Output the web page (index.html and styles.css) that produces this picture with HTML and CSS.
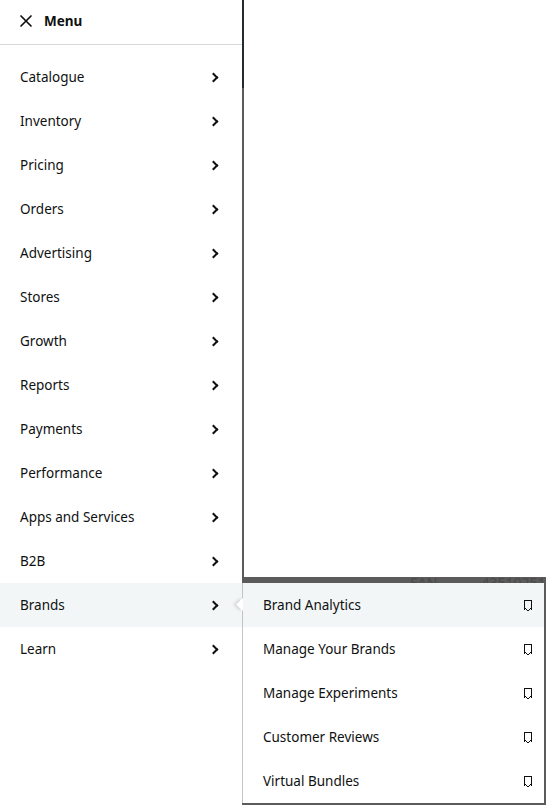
FILE: index.html
```html
<!DOCTYPE html>
<html lang="en">
<head>
  <meta charset="UTF-8">
  <meta name="viewport" content="width=device-width, initial-scale=1.0" />
  <title>Seller Central - Menu</title>
  <link rel="stylesheet" href="styles.css">
</head>
<body>

  <div class="shell">

    <!-- side navigation drawer -->
    <nav class="drawer">
      <div class="drawer-head">
        <svg class="close-icon" width="14" height="14" viewBox="0 0 14 14">
          <path d="M2 2L12 12M12 2L2 12" stroke="#0f1111" stroke-width="1.7" stroke-linecap="round" fill="none"/>
        </svg>
        <span class="drawer-title">Menu</span>
      </div>

      <ul class="nav-list">
        <li class="nav-item">Catalogue<span class="chev"></span></li>
        <li class="nav-item">Inventory<span class="chev"></span></li>
        <li class="nav-item">Pricing<span class="chev"></span></li>
        <li class="nav-item">Orders<span class="chev"></span></li>
        <li class="nav-item">Advertising<span class="chev"></span></li>
        <li class="nav-item">Stores<span class="chev"></span></li>
        <li class="nav-item">Growth<span class="chev"></span></li>
        <li class="nav-item">Reports<span class="chev"></span></li>
        <li class="nav-item">Payments<span class="chev"></span></li>
        <li class="nav-item">Performance<span class="chev"></span></li>
        <li class="nav-item">Apps and Services<span class="chev"></span></li>
        <li class="nav-item">B2B<span class="chev"></span></li>
        <li class="nav-item active">Brands<span class="chev"></span>
          <!-- flyout for Brands -->
          <div class="flyout">
            <span class="flyout-arrow"></span>
            <ul class="sub-list">
              <li class="sub-item active">Brand Analytics<span class="pin"></span></li>
              <li class="sub-item">Manage Your Brands<span class="pin"></span></li>
              <li class="sub-item">Manage Experiments<span class="pin"></span></li>
              <li class="sub-item">Customer Reviews<span class="pin"></span></li>
              <li class="sub-item">Virtual Bundles<span class="pin"></span></li>
            </ul>
          </div>
        </li>
        <li class="nav-item">Learn<span class="chev"></span></li>
      </ul>
    </nav>

    <!-- page behind the drawer, dimmed -->
    <main class="backdrop">
      <div class="sheet"></div>
      <div class="sheet-row">
        <span class="cell-label">EAN</span>
        <span class="cell-value">4351025109</span>
      </div>
    </main>

  </div>

</body>
</html>
```

FILE: styles.css
```css
* {
  box-sizing: border-box;
}

body {
  margin: 0;
  font-family: 'Noto Sans', 'Open Sans', sans-serif;
  color: #0f1111;
  background: #5b5b5b;
  overflow: hidden;
}

.shell {
  display: flex;
  height: 805px;
}

/* drawer */

.drawer {
  width: 242px;
  flex-shrink: 0;
  background: #fff;
  position: relative;
  z-index: 2;
}

.drawer-head {
  height: 45px;
  display: flex;
  align-items: center;
  gap: 11px;
  padding: 0 0 2px 19px;
  border-bottom: 1px solid #d5d9d9;
}

.close-icon {
  display: block;
}

.drawer-title {
  font-size: 13.5px;
  font-weight: 700;
}

.nav-list,
.sub-list {
  list-style: none;
  margin: 0;
  padding: 0;
}

.nav-list {
  padding-top: 10px;
}

.nav-item {
  position: relative;
  height: 44px;
  display: flex;
  align-items: center;
  justify-content: space-between;
  padding: 0 25px 0 20px;
  font-size: 13.5px;
}

.nav-item.active {
  background: #f3f6f6;
}

.chev {
  width: 7px;
  height: 7px;
  border-top: 2px solid #0f1111;
  border-right: 2px solid #0f1111;
  transform: rotate(45deg);
}

/* brands flyout */

.flyout {
  position: absolute;
  left: 242px;
  top: 0;
  width: 302px;
  background: #fff;
  border-left: 1px solid #c4c4c4;
}

.flyout-arrow {
  position: absolute;
  left: -5px;
  top: 17px;
  width: 9px;
  height: 9px;
  background: #fff;
  transform: rotate(45deg);
  box-shadow: -2px 2px 3px rgba(0, 0, 0, 0.12);
}

.sub-item {
  position: relative;
  height: 44px;
  display: flex;
  align-items: center;
  justify-content: space-between;
  padding: 0 12px 0 20px;
  font-size: 13.5px;
}

.sub-item.active {
  background: #f3f6f6;
}

.pin {
  width: 8px;
  height: 10px;
  border: 1.3px solid #0f1111;
  border-bottom: none;
  position: relative;
}

.pin::after {
  content: "";
  position: absolute;
  left: -1.3px;
  right: -1.3px;
  bottom: -1px;
  height: 3px;
  background:
    linear-gradient(to top right, transparent 45%, #0f1111 46%, #0f1111 62%, transparent 63%) left / 50% 100% no-repeat,
    linear-gradient(to top left, transparent 45%, #0f1111 46%, #0f1111 62%, transparent 63%) right / 50% 100% no-repeat;
}

/* dimmed page */

.backdrop {
  flex: 1;
  padding-left: 2px;
  background: linear-gradient(#1f2d30 0, #1f2d30 88px, #5b5b5b 88px);
}

.sheet {
  height: 577px;
  background: #fff;
}

.sheet-row {
  background: #5b5b5b;
  height: 40px;
  padding: 0 0 0 166px;
  font-size: 14px;
  line-height: 12px;
  color: #4a4a4a;
  display: flex;
  gap: 44px;
}
```
